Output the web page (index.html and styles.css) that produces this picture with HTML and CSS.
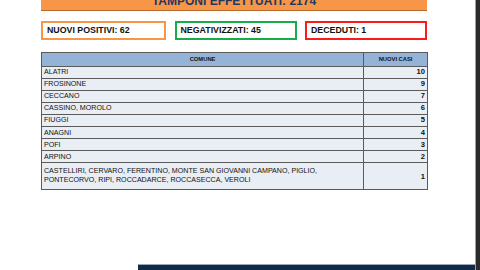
FILE: index.html
```html
<!DOCTYPE html>
<html>
<head>
<meta charset="utf-8">
<link rel="stylesheet" href="styles.css">
</head>
<body>
<div class="screen">
  <div class="slide">
    <div class="content">
      <div class="banner"><span>TAMPONI EFFETTUATI: 2174</span></div>
      <div class="stats">
        <div class="stat stat-orange">NUOVI POSITIVI: 62</div>
        <div class="stat stat-green">NEGATIVIZZATI: 45</div>
        <div class="stat stat-red">DECEDUTI: 1</div>
      </div>
      <table class="cases">
        <thead>
          <tr><th class="c-name">COMUNE</th><th class="c-num">NUOVI CASI</th></tr>
        </thead>
        <tbody>
          <tr><td>ALATRI</td><td class="num">10</td></tr>
          <tr><td>FROSINONE</td><td class="num">9</td></tr>
          <tr><td>CECCANO</td><td class="num">7</td></tr>
          <tr><td>CASSINO, MOROLO</td><td class="num">6</td></tr>
          <tr><td>FIUGGI</td><td class="num">5</td></tr>
          <tr><td>ANAGNI</td><td class="num">4</td></tr>
          <tr><td>POFI</td><td class="num">3</td></tr>
          <tr><td>ARPINO</td><td class="num">2</td></tr>
          <tr class="tall"><td>CASTELLIRI, CERVARO, FERENTINO, MONTE SAN GIOVANNI CAMPANO, PIGLIO,<br>PONTECORVO, RIPI, ROCCADARCE, ROCCASECCA, VEROLI</td><td class="num">1</td></tr>
        </tbody>
      </table>
    </div>
    <div class="footer"><div class="footer-bar"></div></div>
  </div>
  <div class="edge"></div>
</div>
</body>
</html>
```

FILE: styles.css
```css
html, body {
  margin: 0;
  padding: 0;
  width: 480px;
  height: 270px;
  overflow: hidden;
  background: #ffffff;
}
.screen {
  display: flex;
  width: 480px;
  height: 270px;
}
.slide {
  width: 475px;
  height: 270px;
  display: flex;
  flex-direction: column;
  background: #ffffff;
  border-right: 1px solid #a0a0a0;
}
.edge {
  flex: 1;
  background: #2b2b2b;
}
.content {
  flex: 1;
  padding-left: 41px;
  width: 386px;
  font-family: "Liberation Sans", Arial, sans-serif;
  color: #111;
}
.banner {
  margin-top: -10px;
  height: 20px;
  background: #f79646;
  border-bottom: 1px solid #b5692d;
  display: flex;
  justify-content: center;
  align-items: flex-start;
  overflow: hidden;
}
.banner span {
  font-weight: bold;
  font-size: 12px;
  line-height: 12px;
  padding-top: 5px;
  color: #1f3864;
}
.stats {
  margin-top: 10px;
  display: grid;
  grid-template-columns: 125px 122px 122px;
  column-gap: 8.5px;
}
.stat {
  height: 15px;
  border: 2px solid;
  font-weight: bold;
  font-size: 8.8px;
  line-height: 15px;
  padding-left: 4px;
}
.stat-orange { border-color: #f79646; }
.stat-green { border-color: #1aab4b; }
.stat-red { border-color: #ff1a1a; }
.cases {
  margin-top: 12px;
  width: 387px;
  border-collapse: collapse;
  font-size: 7.1px;
}
.cases th, .cases td {
  border: 1px solid #5a5a5a;
  height: 11.1px;
  padding: 0 2px;
  line-height: 8px;
}
.cases th {
  background: #95b3d7;
  height: 12.5px;
  font-weight: bold;
  font-size: 5.8px;
  text-align: center;
}
.c-name { width: 318px; }
.c-num { width: 59px; }
.cases td {
  background: #e9edf4;
}
.cases td.num {
  text-align: right;
  font-weight: bold;
  font-size: 7.6px;
}
.cases tr.tall td {
  height: 26px;
  line-height: 9.5px;
}
.footer {
  height: 6px;
  padding-left: 138px;
}
.footer-bar {
  height: 5px;
  background: #0f2b46;
  border-top: 1px solid #9aa7b4;
}
```
